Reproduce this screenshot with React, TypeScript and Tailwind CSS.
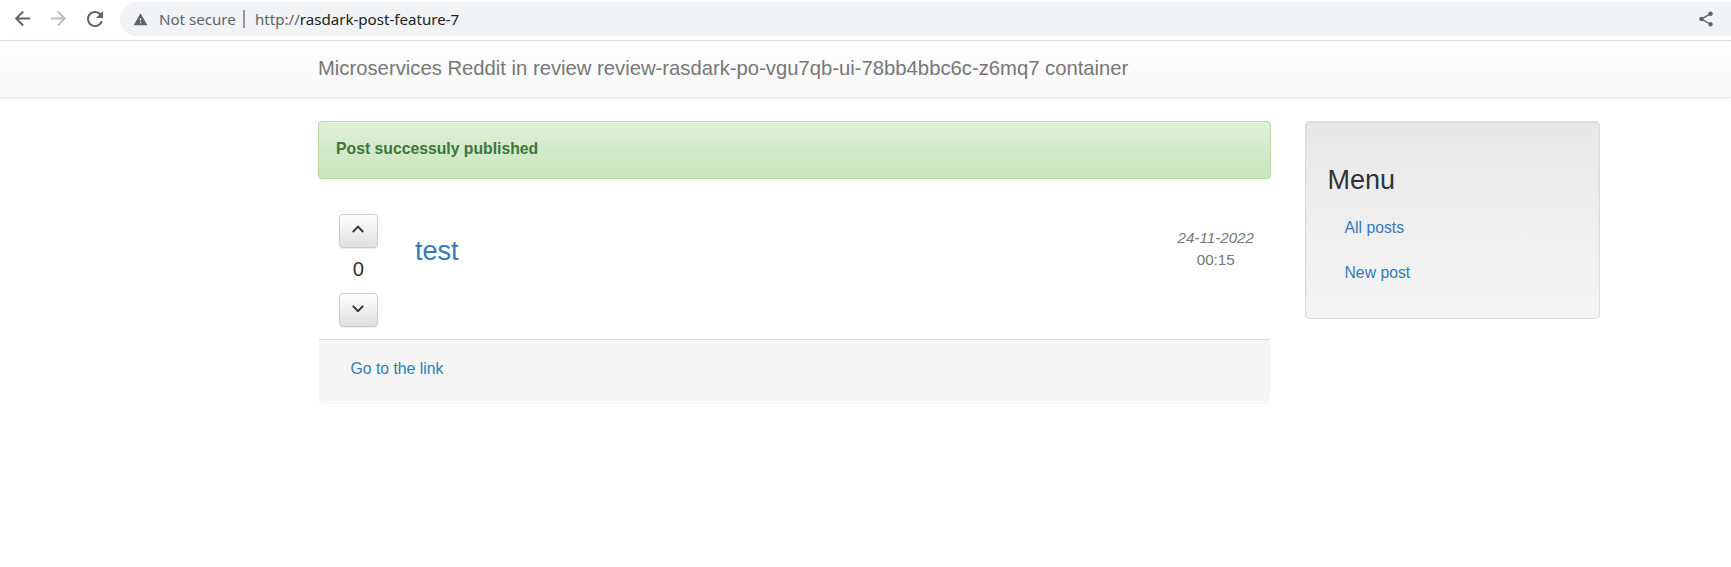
import type { ReactNode } from "react";
import { MdArrowBack, MdArrowForward, MdRefresh, MdShare, MdWarning } from "react-icons/md";

function BrowserBar() {
  return (
    <div className="flex h-[41px] items-start border-b border-[#dadce0] bg-white pt-[2px] font-['Noto_Sans',sans-serif] text-[15.1px]">
      <div className="flex h-[34px] w-[120px] shrink-0 items-center pb-[1px] pl-[11px] text-[#5f6368]">
        <MdArrowBack className="size-[23px]" />
        <MdArrowForward className="ml-[13px] size-[23px] text-[#bcbec1]" />
        <MdRefresh className="ml-[13px] size-[24px]" />
      </div>
      <div className="flex h-[34px] flex-1 items-center rounded-l-full bg-[#f1f3f4] pl-[13px] text-[#5f6368]">
        <MdWarning className="size-[15px]" />
        <span className="ml-[11px] w-[84px] whitespace-nowrap">Not secure</span>
        <span className="h-[18px] w-[2px] bg-[#96999d]" />
        <span className="ml-[10px] whitespace-nowrap">
          http://<span className="text-[#202124]">rasdark-post-feature-7</span>
        </span>
        <MdShare className="mr-[16px] ml-auto size-[18px]" />
      </div>
    </div>
  );
}

function VoteButton({ label, children }: { label: string; children: ReactNode }) {
  return (
    <button
      aria-label={label}
      className="flex h-[34px] w-[39px] justify-center rounded-[4px] border border-[#ccc] bg-linear-to-b from-white to-[#e0e0e0] pt-[10px] pr-[1px] shadow-[inset_0_1px_0_rgba(255,255,255,0.15),0_1px_1px_rgba(0,0,0,0.075)]"
    >
      <svg width="12" height="8" viewBox="0 0 12 8" fill="none" stroke="#333" strokeWidth="1.9">
        {children}
      </svg>
    </button>
  );
}

function Post() {
  return (
    <article className="mt-[24px] rounded-[4px] border border-transparent shadow-[0_1px_1px_rgba(0,0,0,0.05)]">
      <div className="flex h-[135px] pt-[10px] pl-[20px]">
        <div className="flex w-[39px] flex-col items-center">
          <VoteButton label="Vote up">
            <path d="M0.8 7 6 1.7 11.2 7" />
          </VoteButton>
          <span className="mt-[10px] mb-[13px] text-[20.25px] leading-[22px]">0</span>
          <VoteButton label="Vote down">
            <path d="M0.8 1.9 6 7.2 11.2 1.9" />
          </VoteButton>
        </div>
        <h3 className="mt-[22px] ml-[37px] text-[27px] leading-[30px]">
          <a className="text-[#337ab7]">test</a>
        </h3>
        <div className="mt-[13px] mr-[16px] ml-auto text-center text-[15.2px] leading-[22px] text-[#777]">
          <em className="block">24-11-2022</em>
          <span>00:15</span>
        </div>
      </div>
      <div className="h-[62px] rounded-b-[3px] border-t border-[#ddd] bg-[#f5f5f5] pt-[18px] pl-[31.5px] leading-[22px]">
        <a className="text-[#337ab7]">Go to the link</a>
      </div>
    </article>
  );
}

function Menu() {
  return (
    <aside className="h-[198px] w-[295px] shrink-0 rounded-[4px] border border-[#dcdcdc] bg-linear-to-b from-[#e8e8e8] to-[#f5f5f5] pt-[43px] pl-[21.5px] shadow-[inset_0_1px_3px_rgba(0,0,0,0.05),0_1px_0_rgba(255,255,255,0.1)]">
      <h3 className="text-[27px] leading-[30px]">Menu</h3>
      <nav className="mt-[22px] ml-[17px] flex flex-col gap-[23px] leading-[22px] text-[#337ab7]">
        <a>All posts</a>
        <a>New post</a>
      </nav>
    </aside>
  );
}

export default function App() {
  return (
    <div className="h-[567px] overflow-hidden bg-white font-['Liberation_Sans',Arial,sans-serif] text-[15.75px] text-[#333]">
      <BrowserBar />
      <header className="h-[57px] border-b border-[#e7e7e7] bg-linear-to-b from-white to-[#f8f8f8] pt-[16px] pl-[318px] text-[20.25px] leading-[22px] text-[#777] shadow-[0_1px_5px_rgba(0,0,0,0.075)]">
        Microservices Reddit in review review-rasdark-po-vgu7qb-ui-78bb4bbc6c-z6mq7 container
      </header>
      <div className="flex gap-[34px] pt-[23px] pl-[318px]">
        <main className="w-[953px] shrink-0">
          <div className="h-[58px] rounded-[4px] border border-[#b2dba1] bg-linear-to-b from-[#dff0d8] to-[#c8e5bc] pt-[16px] pl-[17px] leading-[22px] font-bold text-[#3c763d] shadow-[inset_0_1px_0_rgba(255,255,255,0.25),0_1px_2px_rgba(0,0,0,0.05)]">
            Post successuly published
          </div>
          <Post />
        </main>
        <Menu />
      </div>
    </div>
  );
}
